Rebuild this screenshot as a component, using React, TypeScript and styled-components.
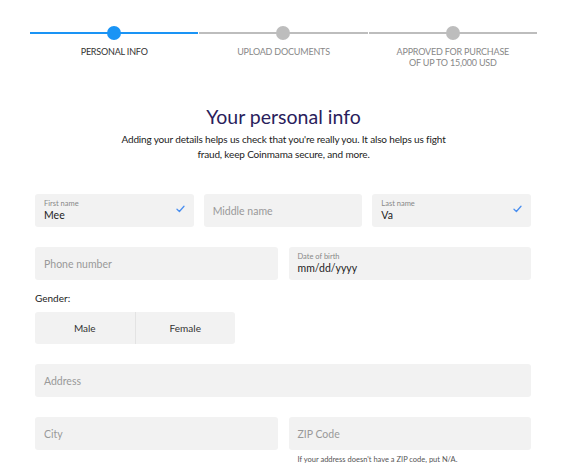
import React, { useState } from 'react';
import styled, { createGlobalStyle } from 'styled-components';

const GlobalStyle = createGlobalStyle`
  body {
    margin: 0;
    background: #ffffff;
    font-family: 'Lato', 'Open Sans', sans-serif;
    color: #222;
  }
`;

const Page = styled.div`
  width: 507px;
  margin-left: 30px;
`;

const Stepper = styled.div`
  display: flex;
  padding-top: 26px;
`;

const Step = styled.div`
  flex: 1;
  position: relative;
  display: flex;
  flex-direction: column;
  align-items: center;
  & + & {
    margin-left: 1px;
  }
`;

const StepLine = styled.div<{ active: boolean }>`
  position: absolute;
  top: 6px;
  left: 0;
  right: 0;
  height: 2px;
  background: ${({ active }) => (active ? '#1a94f5' : '#bdbdbd')};
`;

const Dot = styled.div<{ active: boolean }>`
  position: relative;
  width: 14px;
  height: 14px;
  border-radius: 50%;
  background: ${({ active }) => (active ? '#1a94f5' : '#bdbdbd')};
`;

const StepLabel = styled.div<{ active: boolean }>`
  margin-top: 6px;
  font-size: 9px;
  line-height: 11px;
  text-transform: uppercase;
  text-align: center;
  letter-spacing: -0.2px;
  color: ${({ active }) => (active ? '#333' : '#888')};
`;

const Title = styled.h1`
  margin: 36px 0 0;
  font-size: 19.5px;
  font-weight: 400;
  line-height: 26px;
  text-align: center;
  color: #2a1d5c;
`;

const Subtitle = styled.p`
  margin: 2px auto 0;
  font-size: 10px;
  line-height: 15px;
  letter-spacing: -0.15px;
  text-align: center;
  color: #222;
`;

const Form = styled.div`
  margin: 32px 0 0 5px;
  width: 496px;
  display: flex;
  flex-direction: column;
`;

const Row = styled.div<{ cols: number; gap: number }>`
  display: grid;
  grid-template-columns: repeat(${({ cols }) => cols}, 1fr);
  column-gap: ${({ gap }) => gap}px;
  & + & {
    margin-top: 20px;
  }
`;

const Field = styled.div`
  position: relative;
  height: 33px;
  border-radius: 3px;
  background: #f2f2f2;
  padding: 0 9px;
  display: flex;
  flex-direction: column;
  justify-content: center;
  box-sizing: border-box;
`;

const SmallLabel = styled.span`
  font-size: 7.5px;
  line-height: 9px;
  color: #888;
`;

const Value = styled.span`
  font-size: 10.5px;
  line-height: 14px;
  color: #222;
`;

const Placeholder = styled.span`
  font-size: 10.5px;
  line-height: 14px;
  color: #999;
`;

const Check = styled.svg`
  position: absolute;
  right: 9px;
  top: 11px;
`;

const GenderLabel = styled.div`
  margin-top: 12px;
  font-size: 10px;
  line-height: 12px;
  color: #222;
`;

const Toggle = styled.div`
  margin-top: 8px;
  width: 200px;
  height: 32px;
  display: flex;
  border-radius: 3px;
  background: #f2f2f2;
  overflow: hidden;
  margin-bottom: 20px;
`;

const ToggleOption = styled.button`
  flex: 1;
  border: none;
  background: transparent;
  font-family: inherit;
  font-size: 10px;
  color: #333;
  cursor: pointer;
  & + & {
    border-left: 1px solid #e3e3e3;
  }
`;

const Hint = styled.div`
  font-size: 7.5px;
  line-height: 10px;
  color: #555;
  margin-top: 5px;
  padding-left: 9px;
`;

const steps = [
  { label: 'Personal info', active: true },
  { label: 'Upload documents', active: false },
  { label: ['Approved for purchase', 'of up to 15,000 USD'], active: false },
];

const CheckIcon = () => (
  <Check width="9" height="8" viewBox="0 0 9 8">
    <path d="M1 4.3 L3.4 6.5 L8 1.3" fill="none" stroke="#4a8ff0" strokeWidth="1.3" strokeLinecap="round" strokeLinejoin="round" />
  </Check>
);

const App = () => {
  const [gender, setGender] = useState<string | null>(null);

  return (
    <>
      <GlobalStyle />
      <Page>
        <Stepper>
          {steps.map((s, i) => (
            <Step key={i}>
              <StepLine active={s.active} />
              <Dot active={s.active} />
              <StepLabel active={s.active}>
                {Array.isArray(s.label) ? s.label.map((l) => <div key={l}>{l}</div>) : s.label}
              </StepLabel>
            </Step>
          ))}
        </Stepper>

        <Title>Your personal info</Title>
        <Subtitle>
          Adding your details helps us check that you're really you. It also helps us fight
          <br />
          fraud, keep Coinmama secure, and more.
        </Subtitle>

        <Form>
          <Row cols={3} gap={10}>
            <Field>
              <SmallLabel>First name</SmallLabel>
              <Value>Mee</Value>
              <CheckIcon />
            </Field>
            <Field>
              <Placeholder>Middle name</Placeholder>
            </Field>
            <Field>
              <SmallLabel>Last name</SmallLabel>
              <Value>Va</Value>
              <CheckIcon />
            </Field>
          </Row>
          <Row cols={2} gap={11}>
            <Field>
              <Placeholder>Phone number</Placeholder>
            </Field>
            <Field>
              <SmallLabel>Date of birth</SmallLabel>
              <Value>mm/dd/yyyy</Value>
            </Field>
          </Row>

          <GenderLabel>Gender:</GenderLabel>
          <Toggle>
            {['Male', 'Female'].map((g) => (
              <ToggleOption key={g} onClick={() => setGender(g)} style={gender === g ? { color: '#1a94f5' } : undefined}>
                {g}
              </ToggleOption>
            ))}
          </Toggle>

          <Row cols={1} gap={0}>
            <Field>
              <Placeholder>Address</Placeholder>
            </Field>
          </Row>
          <Row cols={2} gap={11}>
            <Field>
              <Placeholder>City</Placeholder>
            </Field>
            <div>
              <Field>
                <Placeholder>ZIP Code</Placeholder>
              </Field>
              <Hint>If your address doesn't have a ZIP code, put N/A.</Hint>
            </div>
          </Row>
        </Form>
      </Page>
    </>
  );
};

export default App;
